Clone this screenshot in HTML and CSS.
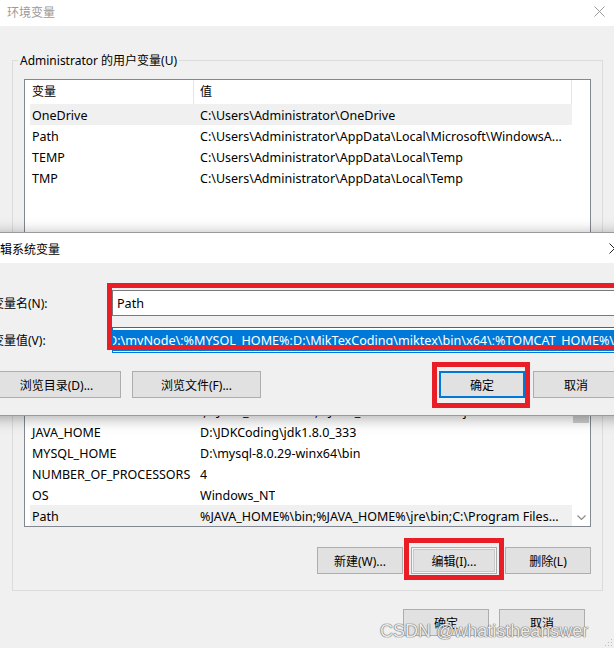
FILE: index.html
```html
<!DOCTYPE html>
<html lang="zh-CN">
<head>
<meta charset="utf-8">
<title>环境变量</title>
<link rel="stylesheet" href="styles.css">
</head>
<body>
<div class="win">
  <div class="titlebar">
    <span class="title">环境变量</span>
    <svg class="x-icon" width="11" height="11" viewBox="0 0 11 11"><path d="M0.5 0.5 L10.5 10.5 M10.5 0.5 L0.5 10.5" stroke="#9a9a9a" stroke-width="1" fill="none"/></svg>
  </div>
  <div class="content">
    <fieldset class="group">
      <legend>Administrator 的用户变量(U)</legend>
      <div class="list user-list">
        <div class="list-main">
          <div class="head"><div class="h1">变量</div><div class="h2">值</div></div>
          <div class="rows">
            <div class="row sel"><span class="c1">OneDrive</span><span class="c2">C:\Users\Administrator\OneDrive</span></div>
            <div class="row"><span class="c1">Path</span><span class="c2">C:\Users\Administrator\AppData\Local\Microsoft\WindowsA...</span></div>
            <div class="row"><span class="c1">TEMP</span><span class="c2">C:\Users\Administrator\AppData\Local\Temp</span></div>
            <div class="row"><span class="c1">TMP</span><span class="c2">C:\Users\Administrator\AppData\Local\Temp</span></div>
          </div>
        </div>
        <div class="vspace"></div>
      </div>
      <div class="btns">
        <div class="btn">新建(N)...</div>
        <div class="btn">编辑(E)...</div>
        <div class="btn">删除(D)</div>
      </div>
    </fieldset>
    <fieldset class="group sys">
      <legend>系统变量(S)</legend>
      <div class="list sys-list">
        <div class="list-main">
          <div class="head"><div class="h1">变量</div><div class="h2">值</div></div>
          <div class="rows bottom">
            <div class="row"><span class="c1">ComSpec</span><span class="c2">C:\Windows\system32\cmd.exe</span></div>
            <div class="row"><span class="c1">DriverData</span><span class="c2">C:\Windows\System32\Drivers\DriverData</span></div>
            <div class="row"><span class="c1">CLASSPATH</span><span class="c2">.;%JAVA_HOME%\lib;%JAVA_HOME%\lib\tools.jar</span></div>
            <div class="row"><span class="c1">JAVA_HOME</span><span class="c2">D:\JDKCoding\jdk1.8.0_333</span></div>
            <div class="row"><span class="c1">MYSQL_HOME</span><span class="c2">D:\mysql-8.0.29-winx64\bin</span></div>
            <div class="row"><span class="c1">NUMBER_OF_PROCESSORS</span><span class="c2">4</span></div>
            <div class="row"><span class="c1">OS</span><span class="c2">Windows_NT</span></div>
            <div class="row sel"><span class="c1">Path</span><span class="c2">%JAVA_HOME%\bin;%JAVA_HOME%\jre\bin;C:\Program Files...</span></div>
          </div>
        </div>
        <div class="vscroll">
          <div class="arrow"></div>
          <div class="thumb"></div>
          <div class="track"></div>
          <div class="arrow"><svg width="9" height="6" viewBox="0 0 9 6"><path d="M0.5 0.5 L4.5 4.5 L8.5 0.5" stroke="#8a8a8a" stroke-width="1.2" fill="none"/></svg></div>
        </div>
      </div>
      <div class="btns">
        <div class="btn">新建(W)...</div>
        <div class="btn focus">编辑(I)...</div>
        <div class="btn">删除(L)</div>
      </div>
    </fieldset>
    <div class="footer">
      <div class="btn">确定</div>
      <div class="btn">取消</div>
    </div>
  </div>
  <div class="grip"></div>
</div>

<div class="dialog">
  <div class="dlg-title">
    <span>编辑系统变量</span>
    <svg class="dlg-x" width="11" height="11" viewBox="0 0 11 11"><path d="M0.5 0.5 L10.5 10.5 M10.5 0.5 L0.5 10.5" stroke="#222" stroke-width="1" fill="none"/></svg>
  </div>
  <div class="dlg-body">
    <div class="field">
      <span class="lbl">变量名(N):</span>
      <div class="input"><span class="val">Path</span></div>
    </div>
    <div class="field">
      <span class="lbl">变量值(V):</span>
      <div class="input focused"><span class="selected">D:\myNode\;%MYSQL_HOME%;D:\MikTexCoding\miktex\bin\x64\;%TOMCAT_HOME%\bin;</span></div>
    </div>
    <div class="dlg-btns">
      <div class="btn-group">
        <div class="btn wide">浏览目录(D)...</div>
        <div class="btn wide">浏览文件(F)...</div>
      </div>
      <div class="btn-group right">
        <div class="btn default">确定</div>
        <div class="btn">取消</div>
      </div>
    </div>
  </div>
</div>

<div class="mark mark-inputs"></div>
<div class="mark mark-ok"></div>
<div class="mark mark-edit"></div>

<div class="watermark">CSDN @whatistheanswer</div>
</body>
</html>
```

FILE: styles.css
```css
* { box-sizing: border-box; }
html, body { margin: 0; padding: 0; }
body {
  width: 614px;
  height: 648px;
  overflow: hidden;
  position: relative;
  background: #f0f0f0;
  font-family: "Noto Sans", "Noto Sans CJK SC", sans-serif;
  font-size: 12px;
  color: #000;
}

.win { height: 648px; position: relative; }

.titlebar {
  height: 26px;
  background: #fff;
  display: flex;
  align-items: center;
  justify-content: space-between;
  padding: 0 9px 0 7px;
}
.title { color: #9a9a9a; font-family: "Noto Sans CJK SC", sans-serif; margin-top: -3px; }
.x-icon { margin-top: -3px; }

.content { padding: 26px 11px 0 12px; }

.group {
  margin: 0;
  min-width: 0;
  border: 1px solid #dcdcdc;
  padding: 10px 11px 16px 11px;
}
.group legend {
  padding: 0 2px;
  margin-left: -6px;
  line-height: 17px;
}
.group.sys { margin-top: 6px; }

.list {
  border: 1px solid #828790;
  background: #fff;
  display: flex;
}
.user-list { height: 165px; }
.sys-list { height: 194px; }

.list-main {
  flex: 1;
  min-width: 0;
  display: flex;
  flex-direction: column;
  padding-left: 5px;
}
.head { height: 24px; display: flex; flex: none; }
.head .h1 {
  width: 164px;
  border-right: 1px solid #e5e5e5;
  padding-left: 2px;
  line-height: 24px;
}
.head .h2 {
  flex: 1;
  border-right: 1px solid #e5e5e5;
  padding-left: 6px;
  line-height: 24px;
}
.rows {
  flex: 1;
  display: flex;
  flex-direction: column;
  overflow: hidden;
  font-size: 12.5px;
}
.rows.bottom { justify-content: flex-end; }
.row {
  flex: none;
  height: 21px;
  display: flex;
  align-items: center;
  white-space: nowrap;
  padding-top: 1px;
}
.row.sel { background: #f0f0f0; }
.row .c1 { width: 170px; padding-left: 2px; flex: none; }
.row .c2 { overflow: hidden; }

.vspace { width: 18px; flex: none; }

.vscroll {
  width: 18px;
  flex: none;
  display: flex;
  flex-direction: column;
}
.vscroll .arrow {
  height: 17px;
  display: flex;
  align-items: center;
  justify-content: center;
}
.vscroll .thumb {
  height: 72px;
  margin: 0 1px;
  background: #cdcdcd;
}
.vscroll .track { flex: 1; }

.btns {
  display: flex;
  justify-content: flex-end;
  gap: 8px;
  margin-top: 12px;
}
.sys .btns { margin-top: 20px; }

.btn {
  width: 86px;
  height: 27px;
  background: #e1e1e1;
  border: 1px solid #adadad;
  display: flex;
  align-items: center;
  justify-content: center;
  white-space: nowrap;
}
.btn.focus { box-shadow: inset 0 0 0 1px #f4f4f4, inset 0 0 0 2px #c8c8c8; }

.footer {
  display: flex;
  justify-content: flex-end;
  gap: 10px;
  margin-top: 18px;
  padding-right: 18px;
}

.grip {
  position: absolute;
  right: 2px;
  bottom: 2px;
  width: 8px;
  height: 8px;
  background:
    radial-gradient(circle, #bdbdbd 0.8px, transparent 1px) 0 0 / 3px 3px;
  clip-path: polygon(100% 0, 100% 100%, 0 100%);
}

/* dialog overlay */
.dialog {
  position: absolute;
  left: -20px;
  top: 232px;
  width: 652px;
  background: #f0f0f0;
  border: 1px solid #9a9a9a;
  box-shadow: 0 2px 14px rgba(0, 0, 0, 0.35);
}
.dlg-title {
  height: 30px;
  background: #fff;
  display: flex;
  align-items: center;
  justify-content: space-between;
  padding: 0 12px 0 7px;
  font-family: "Noto Sans CJK SC", sans-serif;
}
.dlg-x { margin-right: -1px; }
.dlg-body { padding: 27px 12px 17px 11px; }
.field {
  display: grid;
  grid-template-columns: 120px 1fr;
  align-items: center;
  height: 26px;
  margin-bottom: 11px;
}
.field:nth-child(2) { margin-bottom: 0; }
.lbl { white-space: nowrap; }
.input {
  height: 26px;
  background: #fff;
  border: 1px solid #7a7a7a;
  overflow: hidden;
  white-space: nowrap;
  display: flex;
  align-items: center;
  font-size: 12.6px;
}
.input .val { padding-left: 4px; }
.input.focused { border-color: #0078d7; }
.selected {
  display: block;
  background: #0078d7;
  color: #fff;
  line-height: 21px;
  margin-left: -5px;
  padding-right: 20px;
}
.dlg-btns {
  display: flex;
  justify-content: space-between;
  margin-top: 18px;
}
.btn-group { display: flex; gap: 11px; }
.btn-group.right { gap: 8px; }
.btn.wide { width: 129px; }
.btn.default { border: 2px solid #0078d7; }

/* red annotation boxes */
.mark {
  position: absolute;
  border: 5px solid #e81d25;
}
.mark-inputs { left: 107px; top: 283px; width: 512px; height: 67px; }
.mark-ok { left: 432px; top: 362px; width: 98px; height: 46px; }
.mark-edit { left: 404px; top: 538px; width: 100px; height: 42px; }

.watermark {
  position: absolute;
  left: 380px;
  top: 621px;
  font-family: "Liberation Sans", Arial, sans-serif;
  font-size: 18px;
  color: rgba(255, 255, 255, 0.88);
  text-shadow: 0 0 1px #666, 0 0 1px #666, 0 0 1px #888;
  white-space: nowrap;
}
```
